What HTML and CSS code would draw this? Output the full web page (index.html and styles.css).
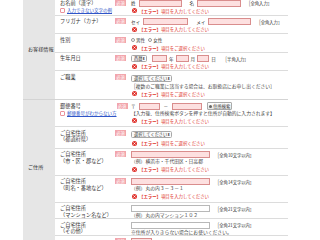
FILE: index.html
```html
<!DOCTYPE html>
<html lang="ja">
<head>
<meta charset="utf-8">
<title>お客様情報</title>
<link rel="stylesheet" href="styles.css">
</head>
<body>
<div class="form">
  <div class="group">
    <div class="ghead">お客様情報</div>
    <div class="gbody">
      <div class="row">
        <div class="lbl"><div class="ltext">お名前（漢字）<br><a class="help" href="#"><i class="hico"></i>入力できない文字の例</a></div><span class="req">必須</span></div>
        <div class="fld">
          <div class="line"><span class="pre">姓</span><span class="inp err w43"></span><span class="pre gapl">名</span><span class="inp err w44"></span><span class="hint">［全角入力］</span></div>
          <div class="error"><svg class="x" viewBox="0 0 10 10"><circle cx="5" cy="5" r="5" fill="#e0342e"/><path d="M3 3l4 4M7 3l-4 4" stroke="#fff" stroke-width="1.6"/></svg><b>【エラー】</b>項目を入力してください</div>
        </div>
      </div>
      <div class="row">
        <div class="lbl"><div class="ltext">フリガナ（カナ）</div><span class="req">必須</span></div>
        <div class="fld">
          <div class="line"><span class="pre">セイ</span><span class="inp err w45"></span><span class="pre gapl">メイ</span><span class="inp err w43"></span><span class="hint">［全角入力］</span></div>
          <div class="error"><svg class="x" viewBox="0 0 10 10"><circle cx="5" cy="5" r="5" fill="#e0342e"/><path d="M3 3l4 4M7 3l-4 4" stroke="#fff" stroke-width="1.6"/></svg><b>【エラー】</b>項目を入力してください</div>
        </div>
      </div>
      <div class="row">
        <div class="lbl"><div class="ltext">性別</div><span class="req">必須</span></div>
        <div class="fld">
          <div class="line"><span class="radio"></span><span class="rtext">男性</span><span class="radio"></span><span class="rtext">女性</span></div>
          <div class="error"><svg class="x" viewBox="0 0 10 10"><circle cx="5" cy="5" r="5" fill="#e0342e"/><path d="M3 3l4 4M7 3l-4 4" stroke="#fff" stroke-width="1.6"/></svg><b>【エラー】</b>項目をご選択ください</div>
        </div>
      </div>
      <div class="row">
        <div class="lbl"><div class="ltext">生年月日</div><span class="req">必須</span></div>
        <div class="fld">
          <div class="line"><span class="sel w16">西暦<i class="arr">⬍</i></span><span class="inp err w15 gapl5"></span><span class="unit">年</span><span class="inp err w13"></span><span class="unit">月</span><span class="inp err w12"></span><span class="unit">日</span><span class="hint">［半角入力］</span></div>
          <div class="error"><svg class="x" viewBox="0 0 10 10"><circle cx="5" cy="5" r="5" fill="#e0342e"/><path d="M3 3l4 4M7 3l-4 4" stroke="#fff" stroke-width="1.6"/></svg><b>【エラー】</b>項目を入力してください</div>
        </div>
      </div>
      <div class="row">
        <div class="lbl"><div class="ltext">ご職業</div><span class="req">必須</span></div>
        <div class="fld">
          <div class="line tall"><span class="sel w41">選択してください<i class="arr">⬍</i></span></div>
          <div class="note">［複数のご職業に該当する場合は、お取扱店にお申し出ください］</div>
          <div class="error"><svg class="x" viewBox="0 0 10 10"><circle cx="5" cy="5" r="5" fill="#e0342e"/><path d="M3 3l4 4M7 3l-4 4" stroke="#fff" stroke-width="1.6"/></svg><b>【エラー】</b>項目をご選択ください</div>
        </div>
      </div>
    </div>
  </div>
  <div class="group">
    <div class="ghead addr">ご住所</div>
    <div class="gbody">
      <div class="row">
        <div class="lbl"><div class="ltext">郵便番号<br><a class="help" href="#"><i class="hico"></i>郵便番号がわからない方</a></div><span class="req">必須</span></div>
        <div class="fld">
          <div class="line"><span class="pre">〒</span><span class="inp err w21"></span><span class="dash">－</span><span class="inp err w30"></span><span class="btn"><i class="bico"></i>住所検索</span></div>
          <div class="note">【入力後、住所検索ボタンを押すと住所が自動的に入力されます】</div>
          <div class="error"><svg class="x" viewBox="0 0 10 10"><circle cx="5" cy="5" r="5" fill="#e0342e"/><path d="M3 3l4 4M7 3l-4 4" stroke="#fff" stroke-width="1.6"/></svg><b>【エラー】</b>項目を入力してください</div>
        </div>
      </div>
      <div class="row">
        <div class="lbl"><div class="ltext">ご自宅住所<br>（都道府県）</div><span class="req">必須</span></div>
        <div class="fld">
          <div class="line tall"><span class="sel w41">選択してください<i class="arr">⬍</i></span></div>
          <div class="error"><svg class="x" viewBox="0 0 10 10"><circle cx="5" cy="5" r="5" fill="#e0342e"/><path d="M3 3l4 4M7 3l-4 4" stroke="#fff" stroke-width="1.6"/></svg><b>【エラー】</b>項目をご選択ください</div>
        </div>
      </div>
      <div class="row">
        <div class="lbl"><div class="ltext">ご自宅住所<br>（市・区・郡など）</div><span class="req">必須</span></div>
        <div class="fld">
          <div class="line"><span class="inp err w79"></span><span class="hint">［全角10文字以内］</span></div>
          <div class="note">（例）横浜市・千代田区・日高郡</div>
          <div class="error"><svg class="x" viewBox="0 0 10 10"><circle cx="5" cy="5" r="5" fill="#e0342e"/><path d="M3 3l4 4M7 3l-4 4" stroke="#fff" stroke-width="1.6"/></svg><b>【エラー】</b>項目を入力してください</div>
        </div>
      </div>
      <div class="row">
        <div class="lbl"><div class="ltext">ご自宅住所<br>（町名・番地など）</div><span class="req">必須</span></div>
        <div class="fld">
          <div class="line"><span class="inp err w79"></span><span class="hint">［全角14文字以内］</span></div>
          <div class="note">（例）丸の内３－３－１</div>
          <div class="error"><svg class="x" viewBox="0 0 10 10"><circle cx="5" cy="5" r="5" fill="#e0342e"/><path d="M3 3l4 4M7 3l-4 4" stroke="#fff" stroke-width="1.6"/></svg><b>【エラー】</b>項目を入力してください</div>
        </div>
      </div>
      <div class="row">
        <div class="lbl"><div class="ltext">ご自宅住所<br>（マンション名など）</div></div>
        <div class="fld">
          <div class="line"><span class="inp w79"></span><span class="hint">［全角21文字以内］</span></div>
          <div class="note">（例）丸の内マンション１０２</div>
        </div>
      </div>
      <div class="row">
        <div class="lbl"><div class="ltext">ご自宅住所<br>（その他）</div></div>
        <div class="fld">
          <div class="line"><span class="inp w79"></span><span class="hint">［全角21文字以内］</span></div>
          <div class="note">※住所が入りきらない場合にお使いください。</div>
        </div>
      </div>
      <div class="row">
        <div class="lbl"><div class="ltext"></div><span class="req">必須</span></div>
        <div class="fld">
          <div class="line"><span class="inp err w21"></span></div>
        </div>
      </div>
    </div>
  </div>
</div>
</body>
</html>
```
FILE: styles.css
```css
body {
  margin: 0;
  background: #fff;
  color: #333;
  font-family: "Noto Sans CJK JP", "Noto Sans", sans-serif;
}
.form {
  margin: -3px 0 0 23px;
  width: 265px;
}
.group {
  display: flex;
}
.group + .group {
  border-top: 1px solid #d4d4d4;
}
.ghead {
  width: 32px;
  flex: none;
  box-sizing: border-box;
  padding-left: 5px;
  background: #e6e6e6;
  font-size: 5.1px;
  line-height: 7px;
  display: flex;
  align-items: center;
}
.ghead.addr {
  align-items: flex-start;
  padding-top: 63px;
}
.gbody {
  flex: 1;
}
.row {
  display: flex;
}
.row + .row {
  border-top: 1px solid #dcdcdc;
}
.lbl {
  width: 74px;
  flex: none;
  box-sizing: border-box;
  padding: 2.5px 3px 0 5px;
  display: flex;
  justify-content: space-between;
  align-items: flex-start;
  font-size: 5.2px;
  line-height: 6.5px;
}
.ltext {
  white-space: nowrap;
}
.help {
  color: #2f55c8;
  text-decoration: underline;
  font-size: 4.5px;
  display: inline-flex;
  align-items: center;
  margin-top: 1px;
}
.hico {
  width: 3px;
  height: 3px;
  border: 1px solid #ec939b;
  border-radius: 1px;
  margin-right: 2px;
}
.req {
  width: 11px;
  flex: none;
  background: #f2a5ac;
  color: #fff;
  font-size: 4.2px;
  line-height: 6px;
  text-align: center;
}
.fld {
  flex: 1;
  padding: 2.5px 0 0 2px;
  font-size: 4.6px;
}
.line {
  display: flex;
  align-items: center;
  height: 7px;
}
.line.tall {
  height: 9px;
}
.pre {
  margin-right: 3px;
}
.gapl {
  margin-left: 8px;
}
.gapl5 {
  margin-left: 5px;
}
.unit {
  margin: 0 2px;
}
.dash {
  margin: 0 4px;
}
.hint {
  margin-left: 5px;
  font-size: 4.3px;
}
.inp {
  height: 7px;
  box-sizing: border-box;
  border: 1px solid #b8b8b8;
  background: #fff;
  flex: none;
}
.inp.err {
  background: #fde0e0;
  border-color: #d98d8d;
}
.w12 { width: 12px; }
.w13 { width: 13px; }
.w15 { width: 15px; }
.w16 { width: 16px; }
.w21 { width: 21px; }
.w30 { width: 30px; }
.w41 { width: 41px; }
.w43 { width: 43px; }
.w44 { width: 44px; }
.w45 { width: 45px; }
.w79 { width: 79px; }
.sel {
  height: 7px;
  box-sizing: border-box;
  border: 1px solid #a8a8a8;
  border-radius: 1.5px;
  background: #fafafa;
  font-size: 4.2px;
  line-height: 5px;
  padding: 0 1px 0 2px;
  display: flex;
  justify-content: space-between;
  align-items: center;
  white-space: nowrap;
  flex: none;
}
.arr {
  font-style: normal;
  font-size: 4px;
}
.radio {
  width: 4px;
  height: 4px;
  box-sizing: border-box;
  border: 1px solid #999;
  border-radius: 50%;
  background: #fff;
  margin-right: 1px;
}
.rtext {
  margin-right: 3px;
}
.btn {
  margin-left: 5px;
  height: 8px;
  width: 25px;
  box-sizing: border-box;
  border: 1px solid #aaa;
  border-radius: 1px;
  background: linear-gradient(#fff, #e4e4e4);
  font-size: 4.2px;
  display: flex;
  align-items: center;
  justify-content: center;
}
.bico {
  width: 3px;
  height: 3px;
  border-radius: 50%;
  background: #666;
  margin-right: 1px;
}
.note {
  font-size: 4.8px;
  line-height: 6px;
  color: #444;
  white-space: nowrap;
}
.error {
  display: flex;
  align-items: center;
  height: 8px;
  color: #e0342e;
  font-size: 4.4px;
  white-space: nowrap;
}
.note + .error {
  height: 10.5px;
}
.line.tall + .error {
  height: 9px;
}
.x {
  width: 5px;
  height: 5px;
  margin: 0 2px 0 1px;
  flex: none;
}
.error b {
  font-weight: bold;
}
```
